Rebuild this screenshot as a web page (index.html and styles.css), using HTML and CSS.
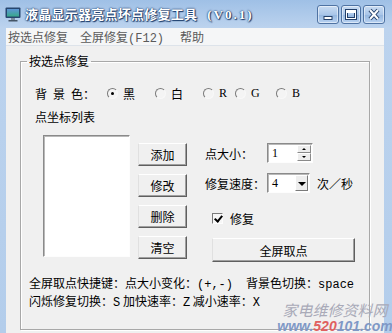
FILE: index.html
```html
<!DOCTYPE html>
<html lang="zh">
<head>
  <meta charset="UTF-8">
  <title>液晶显示器亮点坏点修复工具</title>
  <link rel="stylesheet" href="styles.css">
</head>
<body>
  <div class="window">
    <div class="titlebar">
      <svg class="app-icon" width="16" height="16" viewBox="0 0 16 16">
        <defs>
          <linearGradient id="scr" x1="0" y1="0" x2="0" y2="1">
            <stop offset="0" stop-color="#5d95d6"/>
            <stop offset="1" stop-color="#38a98a"/>
          </linearGradient>
        </defs>
        <rect x="0.5" y="1.5" width="15" height="10.5" rx="1" fill="#27466f"/>
        <rect x="2" y="3" width="12" height="7.5" fill="url(#scr)"/>
        <rect x="6" y="12" width="4" height="2" fill="#7b8b9c"/>
        <rect x="3.5" y="14" width="9" height="1.5" fill="#445566"/>
      </svg>
      <span class="title">液晶显示器亮点坏点修复工具<span class="ver">(V0.1)</span></span>
      <div class="caption-btns">
        <span class="cap cap-min">
          <svg width="20" height="17" viewBox="0 0 20 17"><rect x="6" y="10.5" width="8" height="3" fill="#fff" stroke="#24406a"/></svg>
        </span>
        <span class="cap cap-max">
          <svg width="18" height="17" viewBox="0 0 18 17"><rect x="4.5" y="4.5" width="9" height="8" fill="none" stroke="#24406a" stroke-width="3"/><rect x="4.5" y="4.5" width="9" height="8" fill="none" stroke="#fff"/><rect x="5" y="5" width="8" height="2" fill="#fff"/></svg>
        </span>
        <span class="cap cap-close">
          <svg width="20" height="17" viewBox="0 0 20 17"><path d="M6 4 L14 13 M14 4 L6 13" stroke="#24406a" stroke-width="4"/><path d="M6 4 L14 13 M14 4 L6 13" stroke="#fff" stroke-width="2"/></svg>
        </span>
      </div>
    </div>

    <div class="menubar">
      <span class="menu-item">按选点修复</span>
      <span class="menu-item">全屏修复<span class="lat">(F12)</span></span>
      <span class="menu-item">帮助</span>
    </div>

    <div class="client">
      <fieldset class="group">
        <legend>按选点修复</legend>
        <div class="group-body">
          <div class="bg-row">
            <span class="bg-label">背&ensp;景&ensp;色：</span>
            <label class="radio r-black"><span class="dot checked"></span>黑</label>
            <label class="radio r-white"><span class="dot"></span>白</label>
            <label class="radio r-r"><span class="dot"></span><span class="serif">R</span></label>
            <label class="radio r-g"><span class="dot"></span><span class="serif">G</span></label>
            <label class="radio"><span class="dot"></span><span class="serif">B</span></label>
          </div>

          <div class="list-title">点坐标列表</div>

          <div class="main-row">
            <div class="listbox"></div>
            <div class="btn-col">
              <button class="btn">添加</button>
              <button class="btn">修改</button>
              <button class="btn">删除</button>
              <button class="btn">清空</button>
            </div>
            <div class="opts">
              <div class="opt-row first">
                <span class="opt-label">点大小：</span>
                <div class="spin">
                  <span class="field-val">1</span>
                  <div class="spin-btns">
                    <span class="spin-up"></span>
                    <span class="spin-down"></span>
                  </div>
                </div>
              </div>
              <div class="opt-row">
                <span class="opt-label">修复速度：</span>
                <div class="combo">
                  <span class="field-val">4</span>
                  <span class="combo-btn"></span>
                </div>
                <span class="unit">次／秒</span>
              </div>
              <label class="check-row"><span class="checkbox"></span>修复</label>
              <button class="btn wide">全屏取点</button>
            </div>
          </div>

          <div class="hints">
            <p>全屏取点快捷键：点大小变化：<span class="lat">(+,-)</span><span class="sp"></span>背景色切换：<span class="lat">space</span></p>
            <p>闪烁修复切换：<span class="lat">S</span> 加快速率：<span class="lat">Z</span> 减小速率：<span class="lat">X</span></p>
          </div>
        </div>
      </fieldset>
    </div>

    <div class="watermark">
      <div class="wm-cn">家电维修资料网</div>
      <div class="wm-url">www.<span class="wm-red">520</span>101.com</div>
    </div>
  </div>
</body>
</html>
```

FILE: styles.css
```css
body {
  margin: 0;
  font-family: "Noto Sans CJK SC", sans-serif;
  font-size: 12px;
  color: #000;
  background: #fff;
}

.window {
  position: relative;
  width: 392px;
  height: 333px;
  display: flex;
  flex-direction: column;
  overflow: hidden;
  background: linear-gradient(to bottom, #9fc0e6 0, #bcd3ee 28px, #b3cdeb 100%);
}

/* title bar */
.titlebar {
  height: 28px;
  display: flex;
  align-items: center;
  padding-left: 5px;
}
.app-icon { margin-right: 4px; }
.title {
  font-weight: bold;
  font-size: 13px;
  letter-spacing: 0.25px;
  color: #fff;
  text-shadow: 0 0 2px #1b3c6c, 0 0 1px #1b3c6c, 1px 1px 1px #1b3c6c;
  line-height: 16px;
}
.ver {
  font-family: "Liberation Serif", serif;
  letter-spacing: 2px;
  margin-left: 10px;
}
.caption-btns {
  margin-left: auto;
  margin-right: 7px;
  display: flex;
  gap: 2px;
}
.cap {
  height: 19px;
  border: 1px solid #4f73a3;
  border-radius: 3px;
  box-sizing: border-box;
  display: flex;
  align-items: center;
  justify-content: center;
  background: linear-gradient(to bottom, #c9dcf2 0, #aac6e9 50%, #94b6df 51%, #b8d2f1 100%);
  box-shadow: inset 0 0 0 1px rgba(255,255,255,0.5);
}
.cap-min { width: 22px; }
.cap-max { width: 20px; }
.cap-close { width: 22px; }

/* menu */
.menubar {
  height: 17px;
  margin: 0 8px 0 6px;
  padding-left: 2px;
  display: flex;
  align-items: center;
  background: #f5f6f7;
  border-bottom: 1px solid #dde3ea;
  color: #5a5a5a;
}
.menu-item { margin-right: 12px; }
.menu-item:nth-child(2) { margin-right: 16px; }

.lat {
  font-family: "Liberation Mono", monospace;
  font-size: 12px;
}
.serif {
  font-family: "Liberation Serif", serif;
  font-size: 12px;
}

/* client */
.client {
  flex: 1;
  margin: 0 8px 0 6px;
  padding: 8px 14px 0 14px;
  background: #f0f0f0;
}
.group {
  margin: 0;
  padding: 0;
  border: 1px solid #a8a8a8;
  box-shadow: 1px 1px 0 #fff, inset 1px 1px 0 #fff;
}
.group legend {
  margin-left: 6px;
  padding: 0 2px;
  line-height: 14px;
}
.group-body {
  padding: 17px 0 18px 8px;
}

.bg-row {
  margin-left: 6px;
  height: 16px;
  display: flex;
  align-items: center;
}
.bg-label { width: 72px; }
.radio {
  display: flex;
  align-items: center;
  gap: 5px;
}
.r-black, .r-white { width: 48px; }
.r-r { width: 32px; }
.r-g { width: 41px; }
.dot {
  position: relative;
  width: 11px;
  height: 11px;
  box-sizing: border-box;
  border-radius: 50%;
  border: 1px solid;
  border-color: #7a7a7a #f8f8f8 #f8f8f8 #7a7a7a;
  background: #f4f4f4;
}
.dot.checked::after {
  content: "";
  position: absolute;
  left: 3px;
  top: 3px;
  width: 3px;
  height: 3px;
  border-radius: 50%;
  background: #000;
}

.list-title {
  margin: 8px 0 0 6px;
  line-height: 16px;
}

.main-row {
  margin: 10px 0 0 14px;
  display: flex;
  align-items: flex-start;
}
.listbox {
  width: 87px;
  height: 122px;
  box-sizing: border-box;
  background: #fff;
  border: 1px solid;
  border-color: #8a8a8a #fdfdfd #fdfdfd #8a8a8a;
  box-shadow: inset 1px 1px 0 #b9b9b9;
}
.btn-col {
  margin-left: 8px;
  padding-top: 8px;
  display: flex;
  flex-direction: column;
  gap: 8px;
}
.btn {
  width: 49px;
  height: 23px;
  padding: 0;
  font-family: inherit;
  font-size: 12px;
  color: #000;
  background: #f0f0f0;
  border: 1px solid;
  border-color: #fff #5f5f5f #5f5f5f #e0e0e0;
  box-shadow: inset -1px -1px 0 #a0a0a0;
}
.btn.wide {
  width: 143px;
  height: 24px;
  margin: 12px 0 0 7px;
}

.opts {
  margin-left: 18px;
  padding-top: 8px;
  display: flex;
  flex-direction: column;
}
.opt-row {
  height: 20px;
  display: flex;
  align-items: center;
  margin-top: 10px;
}
.opt-row.first { margin-top: 0; }
.opt-label { width: 62px; }
.spin, .combo {
  height: 20px;
  box-sizing: border-box;
  display: flex;
  align-items: center;
  background: #fff;
  border: 1px solid;
  border-color: #8a8a8a #fdfdfd #fdfdfd #8a8a8a;
  box-shadow: inset 1px 1px 0 #b9b9b9;
}
.spin { width: 46px; }
.combo { width: 43px; }
.field-val {
  flex: 1;
  padding-left: 4px;
  font-family: "Liberation Serif", serif;
}
.spin-btns {
  width: 14px;
  height: 16px;
  margin-right: 1px;
  display: flex;
  flex-direction: column;
}
.spin-up, .spin-down {
  flex: 1;
  position: relative;
  background: #eeeeee;
  border: 1px solid;
  border-color: #fff #8a8a8a #8a8a8a #fff;
}
.spin-up::after, .spin-down::after {
  content: "";
  position: absolute;
  left: 4px;
  border-left: 2px solid transparent;
  border-right: 2px solid transparent;
}
.spin-up::after { top: 2px; border-bottom: 2px solid #000; }
.spin-down::after { top: 2px; border-top: 2px solid #000; }
.combo-btn {
  position: relative;
  width: 13px;
  height: 16px;
  margin-right: 1px;
  box-sizing: border-box;
  background: #eeeeee;
  border: 1px solid;
  border-color: #fff #7a7a7a #7a7a7a #fff;
}
.combo-btn::after {
  content: "";
  position: absolute;
  left: 2px;
  top: 6px;
  border-left: 4px solid transparent;
  border-right: 4px solid transparent;
  border-top: 4px solid #000;
}
.unit { margin-left: 7px; }

.check-row {
  margin: 17px 0 0 7px;
  height: 16px;
  display: flex;
  align-items: center;
  gap: 7px;
}
.checkbox {
  position: relative;
  width: 11px;
  height: 11px;
  box-sizing: border-box;
  background: #f6f6f6;
  border: 1px solid;
  border-color: #7a7a7a #fdfdfd #fdfdfd #7a7a7a;
}
.checkbox::after {
  content: "";
  position: absolute;
  left: 3px;
  top: 0;
  width: 3px;
  height: 6px;
  border: solid #000;
  border-width: 0 2px 2px 0;
  transform: rotate(40deg);
}

.hints {
  margin-top: 13px;
  line-height: 15px;
}
.hints p { margin: 0; }
.sp {
  display: inline-block;
  width: 13px;
}

/* scanned watermark in the lower right corner */
.watermark {
  position: absolute;
  right: -8px;
  bottom: -1px;
  width: 130px;
  text-align: center;
  white-space: nowrap;
  pointer-events: none;
}
.wm-cn {
  font-size: 15px;
  font-style: italic;
  color: #a9aab8;
  line-height: 18px;
}
.wm-url {
  font-family: "Liberation Sans", sans-serif;
  font-weight: bold;
  font-style: italic;
  font-size: 14px;
  line-height: 15px;
  color: #7f98c6;
}
.wm-red { color: #e06060; }
```
